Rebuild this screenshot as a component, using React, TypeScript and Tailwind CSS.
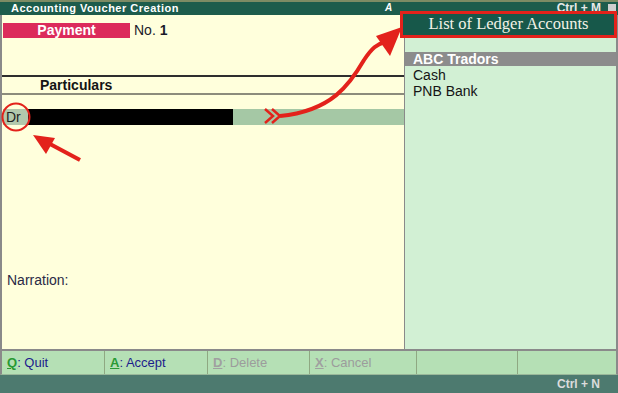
import React from 'react';

function KeyButton({ k, label, disabled, w }: { k?: string; label?: string; disabled?: boolean; w: string }) {
  return (
    <div className={`${w} h-full border-r border-[#8fa882] flex items-center pl-[5px] pt-[1px] text-[13px]`}>
      {k && (
        <>
          <span className={`font-bold underline ${disabled ? 'text-[#a0a0a0]' : 'text-[#2a9a34]'}`}>{k}</span>
          <span className={disabled ? 'text-[#9c9c9c]' : 'text-[#1c1c8c]'}>: {label}</span>
        </>
      )}
    </div>
  );
}

export default function App() {
  return (
    <div className="w-[618px] h-[393px] relative overflow-hidden flex flex-col bg-[#ffffdc] font-['Liberation_Sans',Arial,sans-serif]">
      {/* top strip + title bar */}
      <div className="h-[2px] bg-[#7d8b64]" />
      <div className="h-[13px] bg-[#1d5c4c] flex items-center text-white text-[11px] font-bold leading-none">
        <span className="w-[385px] pl-[11px] tracking-[0.5px]">Accounting Voucher&nbsp;Creation</span>
        <span className="italic text-[10px]">A</span>
        <span className="ml-auto mr-[7px] text-[12px] text-[#e8e8e8]">Ctrl + M</span>
        <span className="w-[8px] h-[9px] bg-[#cfcfcf] mr-[2px]" />
      </div>

      {/* body */}
      <div className="flex h-[340px] border-l-2 border-r-2 border-b-2 border-[#8a8a8a]">
        {/* voucher area */}
        <div className="w-[402px] flex flex-col bg-[#ffffdc] text-[14px] leading-[16px]">
          <div className="mt-[8px] h-[15px] flex items-center">
            <div className="ml-[1px] w-[127px] h-full bg-[#dc2b5b] text-white font-bold flex items-center justify-center">Payment</div>
            <span className="ml-[4px] text-[#1a1a2a]">No. <b>1</b></span>
          </div>
          <div className="mt-[37px] border-t-2 border-b-2 border-t-[#2e2e2e] border-b-[#8c8c7c] h-[20px] flex items-center pl-[38px] font-bold text-[#141414]">
            Particulars
          </div>
          <div className="mt-[14px] h-[16px] flex ml-[1px] bg-[#a5c8a5]">
            <div className="w-[25px] bg-[#b2c8ac] flex items-center pl-[3px] text-[#1e1e1e]">Dr</div>
            <div className="w-[205px] bg-black" />
          </div>
          <div className="mt-[147px] pl-[5px] text-[#2a2a46]">Narration:</div>
        </div>

        {/* ledger list */}
        <div className="flex-1 bg-[#d2f0d4] border-l border-[#8a8a8a] text-[14px] leading-[16px] text-[#141414]">
          <div className="mt-[37px] h-[14px] bg-[#8c8c8c] text-white font-bold flex items-center pl-[8px]">ABC Tradors</div>
          <div className="pl-[8px] mt-[1px]">Cash</div>
          <div className="pl-[8px]">PNB Bank</div>
        </div>
      </div>

      {/* key bar */}
      <div className="h-[24px] flex bg-[#b5e0b5] border-l-2 border-r-2 border-[#8a8a8a] border-b border-b-[#9ab89a]">
        <KeyButton k="Q" label="Quit" w="w-[103px]" />
        <KeyButton k="A" label="Accept" w="w-[103px]" />
        <KeyButton k="D" label="Delete" disabled w="w-[102px]" />
        <KeyButton k="X" label="Cancel" disabled w="w-[107px]" />
        <KeyButton w="w-[101px]" />
        <div className="flex-1" />
      </div>
      <div className="flex-1 bg-[#4d7a6f] flex items-center justify-end pr-[18px] text-[12px] font-bold text-[#dcdcdc]">Ctrl + N</div>

      {/* ledger header popup */}
      <div className="absolute left-[400px] top-[11px] w-[217px] h-[27px] border-[3px] border-[#e3221b] bg-[#17584a] flex items-center justify-center text-[16.5px] text-[#f2f2e6] font-['Liberation_Serif','Times_New_Roman',serif]">
        List of Ledger Accounts
      </div>

      {/* annotations */}
      <svg className="absolute inset-0 pointer-events-none" width="618" height="393" viewBox="0 0 618 393">
        <circle cx="16" cy="117" r="13.5" fill="none" stroke="#e3221b" strokeWidth="2" />
        <line x1="80" y1="160" x2="50" y2="144" stroke="#e3221b" strokeWidth="4" />
        <polygon points="33,135 55,138 46,154" fill="#e3221b" />
        <path d="M265 109 L273 116 L265 123 M272 109 L280 116 L272 123" fill="none" stroke="#e3221b" strokeWidth="2.5" />
        <path d="M280 116 C332 111 350 84 364 60 C372 48 377 44 385 42" fill="none" stroke="#e3221b" strokeWidth="4" />
        <polygon points="402,27 376,36 390,56" fill="#e3221b" />
      </svg>
    </div>
  );
}
